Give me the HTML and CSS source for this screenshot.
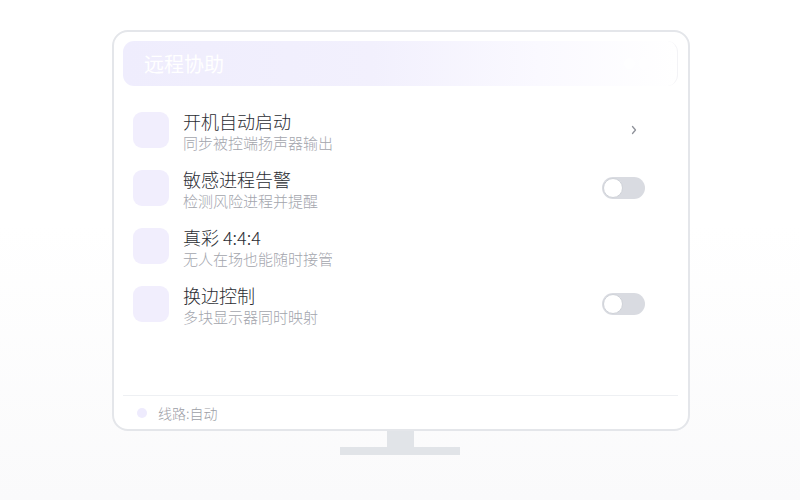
FILE: index.html
```html
<!DOCTYPE html>
<html lang="zh">
<head>
<meta charset="utf-8">
<link rel="stylesheet" href="styles.css">
</head>
<body>
<div class="stage">
  <div class="monitor">
    <div class="header">
      <span class="header-title">远程协助</span>
      <span class="header-extra">● ●</span>
    </div>
    <div class="list">
      <div class="row">
        <div class="icon"></div>
        <div class="texts">
          <div class="title">开机自动启动</div>
          <div class="sub">同步被控端扬声器输出</div>
        </div>
        <svg class="chev" width="8" height="12" viewBox="0 0 8 12"><path d="M2.5 2.5 L5.5 6 L2.5 9.5" fill="none" stroke="#8f929a" stroke-width="1.3" stroke-linecap="round" stroke-linejoin="round"/></svg>
      </div>
      <div class="row">
        <div class="icon"></div>
        <div class="texts">
          <div class="title">敏感进程告警</div>
          <div class="sub">检测风险进程并提醒</div>
        </div>
        <div class="toggle"><div class="knob"></div></div>
      </div>
      <div class="row">
        <div class="icon"></div>
        <div class="texts">
          <div class="title">真彩 4:4:4</div>
          <div class="sub">无人在场也能随时接管</div>
        </div>
      </div>
      <div class="row">
        <div class="icon"></div>
        <div class="texts">
          <div class="title">换边控制</div>
          <div class="sub">多块显示器同时映射</div>
        </div>
        <div class="toggle"><div class="knob"></div></div>
      </div>
    </div>
    <div class="footer">
      <span class="dot"></span>
      <span class="footer-text">线路:自动</span>
    </div>
  </div>
  <div class="neck"></div>
  <div class="base"></div>
</div>
</body>
</html>
```
FILE: styles.css
```css
html, body {
  margin: 0;
  padding: 0;
}
body {
  width: 800px;
  height: 500px;
  background: linear-gradient(180deg, #ffffff 0%, #ffffff 45%, #fafafb 100%);
  font-family: "Noto Sans CJK SC", "Noto Sans", sans-serif;
  font-weight: 300;
  overflow: hidden;
}
.stage {
  display: flex;
  flex-direction: column;
  align-items: center;
  padding-top: 30px;
}
.monitor {
  box-sizing: border-box;
  width: 578px;
  height: 401px;
  margin-left: 2px;
  border: 2px solid #e4e6ea;
  border-radius: 16px;
  background: #ffffff;
  padding: 9px 10px 0 9px;
  display: flex;
  flex-direction: column;
}
.header {
  height: 45px;
  border-radius: 11px;
  background: linear-gradient(90deg, #efedfd 0%, #f2f0fd 45%, #faf9ff 75%, #ffffff 100%);
  display: flex;
  align-items: center;
  justify-content: space-between;
  padding: 0 21px;
  border-right: 1px solid #f3f3f6;
}
.header-title {
  color: #ffffff;
  font-size: 20px;
  line-height: 24px;
  font-weight: 400;
}
.header-extra {
  color: rgba(255,255,255,0.9);
  font-size: 12px;
  margin-right: 6px;
}
.list {
  display: flex;
  flex-direction: column;
  padding: 26px 33px 0 10px;
}
.row {
  display: flex;
  align-items: flex-start;
  height: 58px;
}
.icon {
  width: 36px;
  height: 36px;
  border-radius: 9px;
  background: #f1eefd;
  flex: none;
}
.texts {
  margin-left: 14px;
  flex: 1;
  margin-top: -2px;
}
.title {
  font-size: 18px;
  line-height: 22px;
  color: #2b2d33;
}
.sub {
  font-size: 15px;
  line-height: 18px;
  color: #a3a5ad;
  margin-top: 2px;
}
.chev {
  margin-top: 12px;
  margin-right: 7px;
}
.toggle {
  box-sizing: border-box;
  width: 43px;
  height: 22px;
  border-radius: 11px;
  background: #d9dbe1;
  margin-top: 7px;
  padding: 1px;
}
.knob {
  box-sizing: border-box;
  width: 20px;
  height: 20px;
  border-radius: 50%;
  background: #ffffff;
  border: 1px solid #cfd2d8;
}
.footer {
  margin-top: auto;
  height: 33px;
  border-top: 1px solid #eef0f3;
  display: flex;
  align-items: center;
  padding-left: 14px;
}
.dot {
  width: 10px;
  height: 10px;
  border-radius: 50%;
  background: #eeebfd;
}
.footer-text {
  margin-left: 11px;
  font-size: 14px;
  color: #9c9ea6;
}
.neck {
  width: 27px;
  height: 16px;
  background: #e1e4e8;
  margin-left: 1px;
}
.base {
  width: 120px;
  height: 8px;
  background: #e1e4e8;
}
```
